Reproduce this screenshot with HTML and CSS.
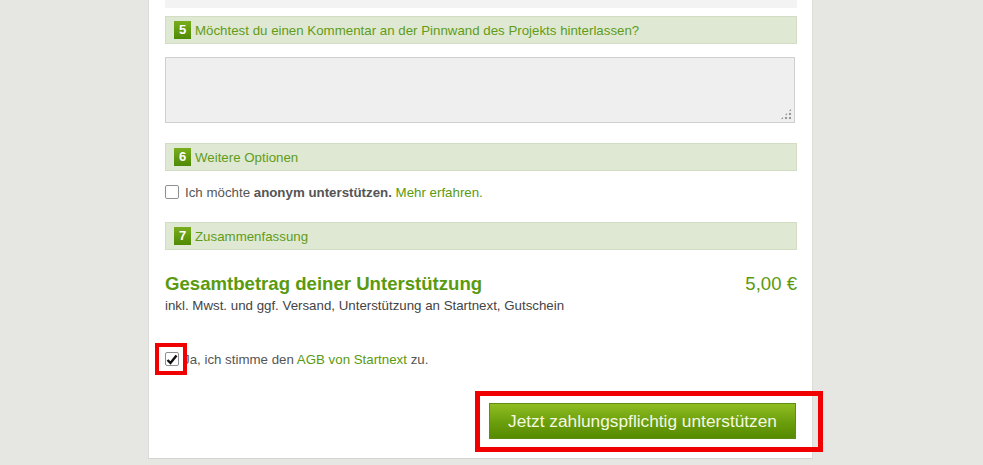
FILE: index.html
```html
<!DOCTYPE html>
<html>

<head>
    <meta charset='utf-8'>
    <title>Unterstützung</title>
    <link rel="stylesheet" href="styles.css">
</head>

<body>
    <div class="panel">
        <div class="strip"></div>

        <div class="step"><span class="num">5</span>Möchtest du einen Kommentar an der Pinnwand des Projekts hinterlassen?</div>
        <div class="comment">
            <span class="grip"></span>
        </div>

        <div class="step step_6"><span class="num">6</span>Weitere Optionen</div>
        <div class="check_row check_anon">
            <span class="box"></span>
            <span>Ich möchte <b>anonym unterstützen.</b> <a href="#">Mehr erfahren.</a></span>
        </div>

        <div class="step step_7"><span class="num">7</span>Zusammenfassung</div>
        <div class="total">
            <h2>Gesamtbetrag deiner Unterstützung</h2>
            <span class="sum">5,00 €</span>
        </div>
        <p class="total_sub">inkl. Mwst. und ggf. Versand, Unterstützung an Startnext, Gutschein</p>

        <div class="check_row check_agb">
            <span class="box checked">
                <svg width="12" height="11" viewBox="0 0 12 11"><path d="M1.5 6 L4.5 9 L10.5 1.5" fill="none" stroke="#111" stroke-width="2.4" /></svg>
                <span class="mark mark_box"></span>
            </span>
            <span>Ja, ich stimme den <a href="#">AGB von Startnext</a> zu.</span>
        </div>

        <div class="submit_row">
            <button class="btn_submit">Jetzt zahlungspflichtig unterstützen
                <span class="mark mark_btn"></span>
            </button>
        </div>
    </div>
</body>

</html>
```

FILE: styles.css
```css
* {
    margin: 0;
    padding: 0;
    box-sizing: border-box;
}

body {
    background-color: #e6e6e2;
    font-family: Arial, "Liberation Sans", sans-serif;
    font-size: 13.3px;
    color: #555;
    height: 465px;
    overflow: hidden;
}

a {
    color: #5a9a0e;
    text-decoration: none;
}

.panel {
    width: 665px;
    margin-left: 148px;
    padding: 0 15px 19px 16px;
    background-color: #fff;
    border-left: 1px solid #dcdcd8;
    border-right: 1px solid #dcdcd8;
    border-bottom: 1px solid #d4d4d0;
}

.strip {
    height: 8px;
    background-color: #f3f3f3;
}

.step {
    display: flex;
    align-items: center;
    height: 28px;
    margin-top: 8px;
    padding-left: 8px;
    background-color: #dfe8d2;
    border: 1px solid #d3ddc3;
    color: #5f9c18;
    font-size: 13.3px;
}

.num {
    display: inline-block;
    width: 17px;
    height: 18px;
    margin-right: 4px;
    background: linear-gradient(#79ad1c, #4f8a04);
    color: #fff;
    font-weight: bold;
    font-size: 13px;
    line-height: 18px;
    text-align: center;
}

.comment {
    position: relative;
    height: 66px;
    margin-top: 13px;
    margin-right: 2px;
    background-color: #efefef;
    border: 1px solid #cfcfcf;
}

.grip {
    position: absolute;
    right: 2px;
    bottom: 2px;
    width: 12px;
    height: 12px;
    background:
        radial-gradient(circle, #999 1.3px, transparent 1.6px) 0 0 / 4px 4px;
    clip-path: polygon(100% 0, 100% 100%, 0 100%);
}

.step_6 {
    margin-top: 20px;
}

.check_row {
    display: flex;
    align-items: center;
    color: #555;
}

.check_row b {
    color: #555;
}

.box {
    position: relative;
    display: inline-flex;
    align-items: center;
    justify-content: center;
    width: 14px;
    height: 14px;
    margin-right: 6px;
    border: 1px solid #8f8f8f;
    border-radius: 2px;
    background-color: #fff;
}

.check_anon {
    margin-top: 13px;
    height: 16px;
}

.step_7 {
    margin-top: 22px;
}

.total {
    display: flex;
    justify-content: space-between;
    align-items: baseline;
    margin-top: 23px;
}

.total h2 {
    font-size: 18.6px;
    color: #5a9a0e;
}

.sum {
    font-size: 18.6px;
    color: #5a9a0e;
}

.total_sub {
    margin-top: 3px;
    color: #444;
}

.check_agb {
    margin-top: 38px;
    height: 16px;
}

.check_agb .box {
    margin-right: 4px;
}

.submit_row {
    display: flex;
    justify-content: flex-end;
    margin-top: 36px;
    padding-right: 1px;
}

.btn_submit {
    position: relative;
    width: 307px;
    height: 36px;
    border: 1px solid #5d8e12;
    background: linear-gradient(#8fbd22, #6a9e0c 55%, #578b00);
    color: #f4f8e2;
    font-family: Arial, "Liberation Sans", sans-serif;
    font-size: 17.3px;
}

.mark {
    position: absolute;
    border: 4px solid #f00000;
}

.mark_box {
    left: -11px;
    top: -10px;
    width: 32px;
    height: 32px;
}

.mark_btn {
    left: -15px;
    top: -13px;
    width: 348px;
    height: 61px;
    border-width: 5px;
}
```
